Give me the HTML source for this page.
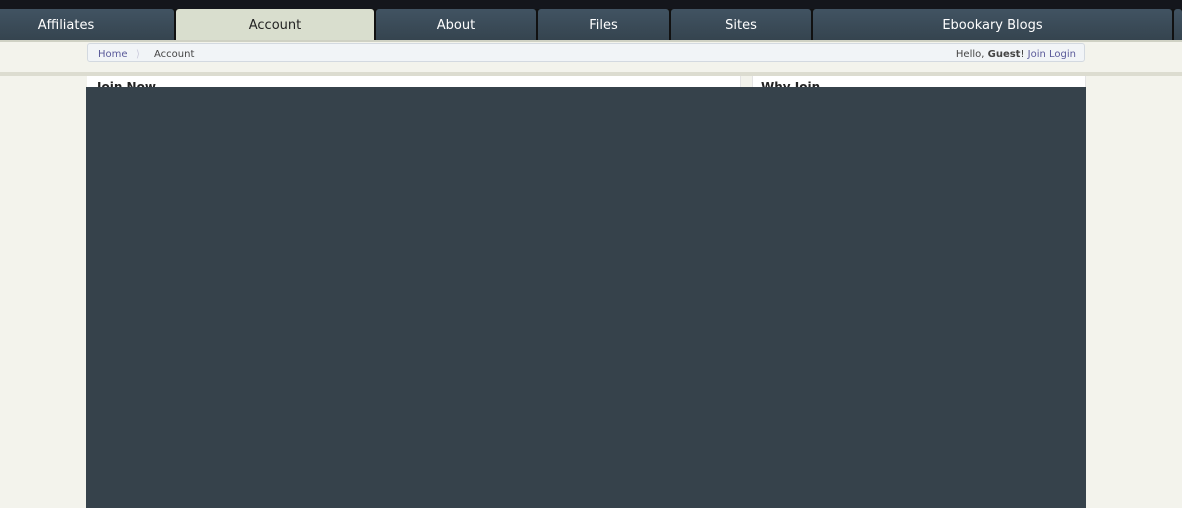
<!DOCTYPE html><html><head><style>
body{margin:0;width:1182px;height:508px;background:#f3f3ec;font-family:"DejaVu Sans",Verdana,sans-serif;position:relative;overflow:hidden}
.a{position:absolute}
.top{left:0;top:0;width:1182px;height:9px;background:#14161c}
.tab{top:9px;height:31px;background:linear-gradient(#415362,#35444f);color:#fff;font-size:13px;text-align:center;line-height:34px;border-radius:3px 3px 0 0}
.nav{left:0;top:9px;width:1182px;height:32px;background:#111}
</style></head><body>
<div class="a top"></div>
<div class="a nav"></div>
<div class="a tab" style="left:0;width:132px;padding-right:42px;border-radius:0 3px 0 0">Affiliates</div>
<div class="a tab" style="left:176px;width:198px;background:#d9dece;color:#222">Account</div>
<div class="a tab" style="left:376px;width:160px">About</div>
<div class="a tab" style="left:538px;width:131px">Files</div>
<div class="a tab" style="left:671px;width:140px">Sites</div>
<div class="a tab" style="left:813px;width:359px">Ebookary Blogs</div>
<div class="a tab" style="left:1174px;width:8px"></div>
<div class="a" style="left:0;top:40px;width:1182px;height:2px;background:#cfd1c4"></div>
<div class="a" style="left:87px;top:43px;width:996px;height:17px;background:#f1f4f7;border:1px solid #d3d9e0;border-radius:3px;font-size:10px;line-height:21px;color:#444">
<span style="position:absolute;left:10px;color:#5a5a9a">Home</span>
<span style="position:absolute;left:48px;top:0;color:#ccd">&#x27E9;</span>
<span style="position:absolute;left:66px">Account</span>
<span style="position:absolute;right:8px">Hello, <b>Guest</b>! <span style="color:#5a5a9a">Join Login</span></span></div>
<div class="a" style="left:0;top:72px;width:1182px;height:4px;background:#dcdcd0"></div>
<div class="a" style="left:87px;top:76px;width:653px;height:432px;background:#fff;border-right:1px solid #e4e4e4"></div>
<div class="a" style="left:752px;top:76px;width:332px;height:432px;background:#fff;border-left:1px solid #e4e4e4;border-right:1px solid #e4e4e4"></div>
<div class="a" style="left:97px;top:80px;font-size:12px;font-weight:bold;color:#222">Join Now</div>
<div class="a" style="left:761px;top:80px;font-size:12px;font-weight:bold;color:#222">Why Join</div>
<div class="a" style="left:86px;top:87px;width:1000px;height:421px;background:#36424b"></div>
</body></html>
